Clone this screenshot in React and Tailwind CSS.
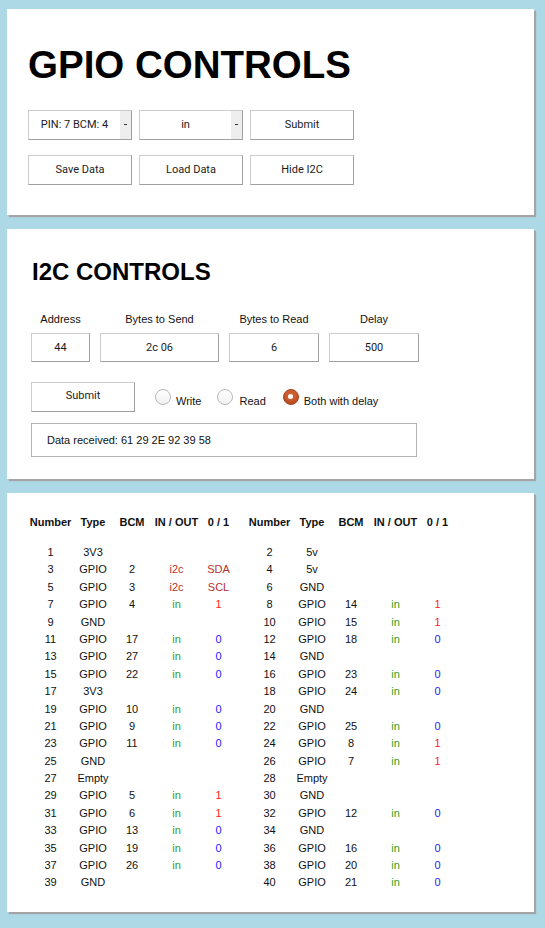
const leftPins = [
  ['1', '3V3'],
  ['3', 'GPIO', '2', 'i2c', 'SDA'],
  ['5', 'GPIO', '3', 'i2c', 'SCL'],
  ['7', 'GPIO', '4', 'in', '1'],
  ['9', 'GND'],
  ['11', 'GPIO', '17', 'in', '0'],
  ['13', 'GPIO', '27', 'in', '0'],
  ['15', 'GPIO', '22', 'in', '0'],
  ['17', '3V3'],
  ['19', 'GPIO', '10', 'in', '0'],
  ['21', 'GPIO', '9', 'in', '0'],
  ['23', 'GPIO', '11', 'in', '0'],
  ['25', 'GND'],
  ['27', 'Empty'],
  ['29', 'GPIO', '5', 'in', '1'],
  ['31', 'GPIO', '6', 'in', '1'],
  ['33', 'GPIO', '13', 'in', '0'],
  ['35', 'GPIO', '19', 'in', '0'],
  ['37', 'GPIO', '26', 'in', '0'],
  ['39', 'GND'],
]

const rightPins = [
  ['2', '5v'],
  ['4', '5v'],
  ['6', 'GND'],
  ['8', 'GPIO', '14', 'in', '1'],
  ['10', 'GPIO', '15', 'in', '1'],
  ['12', 'GPIO', '18', 'in', '0'],
  ['14', 'GND'],
  ['16', 'GPIO', '23', 'in', '0'],
  ['18', 'GPIO', '24', 'in', '0'],
  ['20', 'GND'],
  ['22', 'GPIO', '25', 'in', '0'],
  ['24', 'GPIO', '8', 'in', '1'],
  ['26', 'GPIO', '7', 'in', '1'],
  ['28', 'Empty'],
  ['30', 'GND'],
  ['32', 'GPIO', '12', 'in', '0'],
  ['34', 'GND'],
  ['36', 'GPIO', '16', 'in', '0'],
  ['38', 'GPIO', '20', 'in', '0'],
  ['40', 'GPIO', '21', 'in', '0'],
]

const card = 'bg-white shadow-[2px_2px_1px_#a4a4a4]'
const btn =
  "flex h-[30px] w-[104px] items-center justify-center border border-[#cdcdcd] border-r-[#a0a0a0] border-b-[#a0a0a0] bg-white font-['Roboto',sans-serif] text-[11px] text-[#1c1c1c]"
const field =
  "h-[29px] border border-[#cdcdcd] border-r-[#a0a0a0] border-b-[#a0a0a0] bg-white text-center font-['Roboto',sans-serif] text-[11px] text-[#1c1c1c] outline-none"

const cols = 'grid grid-cols-[45px_40px_38px_51px_33px] items-center text-center'

function ioColor(v) {
  if (v === 'in') return 'text-[#34a020]'
  return 'text-[#b8302c]'
}

function valColor(v) {
  if (v === '1') return 'text-[#ff1a1a]'
  if (v === '0') return 'text-[#1a1aff]'
  return 'text-[#b8302c]'
}

function Select({ label }) {
  return (
    <button type="button" className={`${btn} justify-between p-0`}>
      <span className="flex-1 text-center">{label}</span>
      <span className="flex h-full w-[11px] items-center justify-center bg-[#eeeeee]">
        <span className="mb-[2px] h-[1px] w-[3px] bg-[#333]" />
      </span>
    </button>
  )
}

function PinTable({ pins }) {
  return (
    <div>
      <div className={`${cols} h-[17.4px] font-bold`}>
        <span>Number</span>
        <span>Type</span>
        <span>BCM</span>
        <span>IN / OUT</span>
        <span>0 / 1</span>
      </div>
      <div className="mt-[12.6px]">
        {pins.map((p) => (
          <div key={p[0]} className={`${cols} h-[17.4px]`}>
            <span>{p[0]}</span>
            <span>{p[1]}</span>
            <span>{p[2] || ''}</span>
            <span className={p[3] ? ioColor(p[3]) : ''}>{p[3] || ''}</span>
            <span className={p[4] ? valColor(p[4]) : ''}>{p[4] || ''}</span>
          </div>
        ))}
      </div>
    </div>
  )
}

function Radio({ checked }) {
  if (checked) {
    return (
      <span className="flex h-[16px] w-[16px] items-center justify-center rounded-full border border-[#a8461f] bg-[#cf5e30] shadow-[inset_0_-2px_3px_rgba(120,30,0,0.35)]">
        <span className="h-[5px] w-[5px] rounded-full bg-white" />
      </span>
    )
  }
  return (
    <span className="h-[16px] w-[16px] rounded-full border border-[#b9b9b9] bg-gradient-to-b from-white to-[#f1f1f1]" />
  )
}

export default function App() {
  return (
    <div className="min-h-screen bg-[#add8e6] pt-[9px] pr-[11px] pl-[7px] pb-[16px] font-['Liberation_Sans',Arial,sans-serif] text-[11px] text-[#111]">
      <div className="flex flex-col gap-[14px]">
        {/* GPIO */}
        <section className={`${card} px-[21px] pt-[36px] pb-[30px]`}>
          <h1 className="h-[39px] text-[38.5px] leading-[39px] font-bold text-black">GPIO CONTROLS</h1>
          <div className="mt-[26px] flex gap-[7px]">
            <Select label="PIN: 7 BCM: 4" />
            <Select label="in" />
            <button type="button" className={btn}>Submit</button>
          </div>
          <div className="mt-[15px] flex gap-[7px]">
            <button type="button" className={btn}>Save Data</button>
            <button type="button" className={btn}>Load Data</button>
            <button type="button" className={btn}>Hide I2C</button>
          </div>
        </section>

        {/* I2C */}
        <section className={`${card} pr-[25px] pl-[24px] pt-[31px] pb-[22px]`}>
          <h2 className="ml-[1px] h-[24px] text-[24px] leading-none font-bold text-black">I2C CONTROLS</h2>
          <div className="mt-[29px] flex gap-[10px]">
            {[
              ['Address', '44', 'w-[59px]'],
              ['Bytes to Send', '2c 06', 'w-[119px]'],
              ['Bytes to Read', '6', 'w-[90px]'],
              ['Delay', '500', 'w-[90px]'],
            ].map(([label, value, w]) => (
              <div key={label} className={`flex flex-col items-center ${w}`}>
                <span className="h-[13px] leading-[13px] whitespace-nowrap">{label}</span>
                <input readOnly defaultValue={value} className={`${field} mt-[7px] w-full`} />
              </div>
            ))}
          </div>
          <div className="mt-[20px] flex h-[29px] items-center">
            <button type="button" className={`${btn} h-[29px]`}>Submit</button>
            <label className="ml-[20px] flex items-center">
              <Radio />
              <span className="ml-[5px] pt-[10px] leading-[13px]">Write</span>
            </label>
            <label className="ml-[16px] flex items-center">
              <Radio />
              <span className="ml-[6px] pt-[10px] leading-[13px]">Read</span>
            </label>
            <label className="ml-[17px] flex items-center">
              <Radio checked />
              <span className="ml-[5px] pt-[10px] leading-[13px]">Both with delay</span>
            </label>
          </div>
          <div className="mt-[12px] flex h-[34px] w-[386px] items-center border border-[#b4b4b4] pl-[15px]">
            Data received: 61 29 2E 92 39 58
          </div>
        </section>

        {/* Pin table */}
        <section className={`${card} pt-[20.6px] pb-[20.4px] pl-[21px]`}>
          <div className="flex gap-[12px]">
            <PinTable pins={leftPins} />
            <PinTable pins={rightPins} />
          </div>
        </section>
      </div>
    </div>
  )
}
